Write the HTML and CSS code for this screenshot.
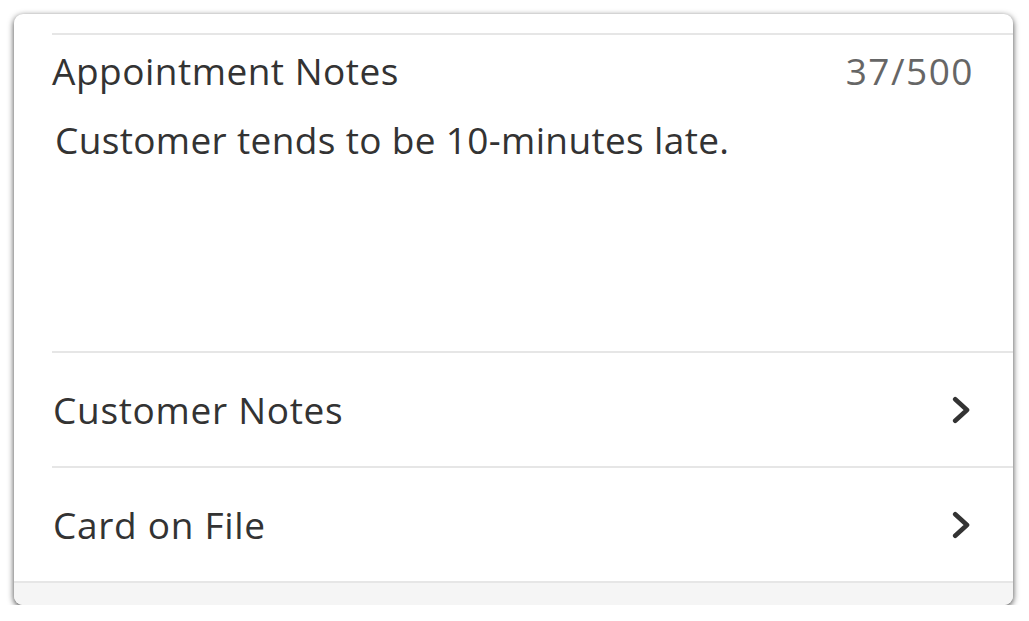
FILE: index.html
```html
<!DOCTYPE html>
<html>
<head>
<meta charset="utf-8">
<link rel="stylesheet" href="styles.css">
</head>
<body>
<div class="card">
  <div class="top-gap"></div>
  <section class="notes">
    <div class="notes-head">
      <span class="label">Appointment Notes</span>
      <span class="counter">37/500</span>
    </div>
    <p class="notes-body">Customer tends to be 10-minutes late.</p>
  </section>
  <a class="row">
    <span class="label">Customer Notes</span>
    <svg class="chev" viewBox="0 0 18 28" width="18" height="28"><path d="M3.2 3.2 L15 14 L3.2 24.8" fill="none" stroke="#333" stroke-width="4.6" stroke-linecap="round" stroke-linejoin="round"/></svg>
  </a>
  <a class="row">
    <span class="label">Card on File</span>
    <svg class="chev" viewBox="0 0 18 28" width="18" height="28"><path d="M3.2 3.2 L15 14 L3.2 24.8" fill="none" stroke="#333" stroke-width="4.6" stroke-linecap="round" stroke-linejoin="round"/></svg>
  </a>
  <div class="footer"></div>
</div>
</body>
</html>
```
FILE: styles.css
```css
html, body {
  margin: 0;
  padding: 0;
  background: #fff;
}
body {
  font-family: "Open Sans", "Noto Sans", sans-serif;
  color: #333;
}
.card {
  margin: 14px 16px 0 14px;
  width: 999px;
  height: 591px;
  border-radius: 9px;
  background: #fff;
  box-shadow: 0 2px 6px rgba(0, 0, 0, 0.75);
  overflow: hidden;
  display: flex;
  flex-direction: column;
}
.top-gap {
  height: 19px;
  flex: none;
}
.notes {
  margin-left: 38px;
  border-top: 2px solid #e6e6e6;
  height: 318px;
  flex: none;
  box-sizing: border-box;
  padding-right: 40px;
}
.notes-head {
  display: flex;
  justify-content: space-between;
  align-items: baseline;
  margin-top: 13px;
}
.label {
  font-size: 37px;
  line-height: 46px;
  letter-spacing: 0.5px;
  color: #333;
}
.row .label {
  letter-spacing: 0.7px;
}
.counter {
  font-size: 37px;
  line-height: 46px;
  letter-spacing: 1.5px;
  margin-right: -1px;
  color: #666;
}
.notes-body {
  margin: 23px 0 0 3px;
  font-size: 37px;
  line-height: 46px;
  letter-spacing: 0.35px;
  color: #333;
}
.row {
  margin-left: 38px;
  border-top: 2px solid #e6e6e6;
  height: 115px;
  flex: none;
  box-sizing: border-box;
  display: flex;
  align-items: center;
  justify-content: space-between;
  padding-right: 43px;
  padding-left: 1px;
}
.chev {
  display: block;
}
.footer {
  flex: 1;
  border-top: 2px solid #e6e6e6;
  background: #f5f5f5;
}
```
